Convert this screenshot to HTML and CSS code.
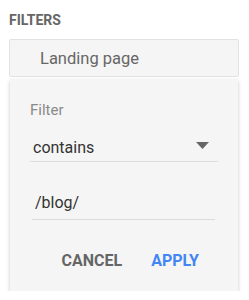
FILE: index.html
```html
<!DOCTYPE html>
<html lang="en">
<head>
    <meta charset="UTF-8">
    <title>Filters</title>
    <link rel="stylesheet" href="styles.css">
</head>
<body>
    <div class="panel">
        <div class="title">FILTERS</div>

        <div class="dimension">Landing page</div>

        <div class="card">
            <div class="label">Filter</div>

            <div class="field select">
                <span>contains</span>
                <svg class="arrow" width="13" height="7" viewBox="0 0 13 7">
                    <path d="M0 0h13L6.5 7z" fill="#666"/>
                </svg>
            </div>

            <div class="field text">/blog/</div>

            <div class="actions">
                <span class="btn cancel">CANCEL</span>
                <span class="btn apply">APPLY</span>
            </div>
        </div>
    </div>
</body>
</html>
```

FILE: styles.css
```css
body {
    margin: 0;
    background: #fff;
    font-family: Roboto, 'Liberation Sans', sans-serif;
}

.panel {
    padding: 11px 10px 0 9px;
}

.title {
    font-size: 14px;
    font-weight: 700;
    line-height: 18px;
    color: #666;
}

.dimension {
    margin-top: 10px;
    height: 38px;
    box-sizing: border-box;
    border: 1px solid #e2e2e2;
    border-radius: 2px;
    background: #f5f5f5;
    padding: 1px 0 0 30px;
    font-size: 16.5px;
    line-height: 35px;
    color: #666;
}

.card {
    margin: 2px 1px 0 1px;
    background: #f5f5f5;
    box-shadow: 0 2px 4px rgba(0, 0, 0, 0.22);
    padding: 22px 20px 21px 20px;
    height: 212px;
    box-sizing: border-box;
    display: flex;
    flex-direction: column;
}

.label {
    font-size: 15px;
    line-height: 18px;
    color: #8a8a8a;
}

.field {
    border-bottom: 1px solid #dcdcdc;
    font-size: 16px;
    color: #333;
    box-sizing: border-box;
}

.select {
    margin-top: 18px;
    height: 25px;
    padding: 1px 9px 0 3px;
    line-height: 20px;
    display: flex;
    justify-content: space-between;
    align-items: flex-start;
}

.select .arrow {
    margin-top: 4px;
}

.text {
    margin: 31px 3px 0 2px;
    height: 28px;
    padding-left: 3px;
    line-height: 20px;
}

.actions {
    margin-top: 32px;
    display: flex;
    justify-content: flex-end;
    gap: 29px;
    padding-right: 19px;
}

.btn {
    font-size: 16px;
    font-weight: 700;
    line-height: 18px;
}

.cancel {
    color: #666;
}

.apply {
    color: #4285f4;
}
```
